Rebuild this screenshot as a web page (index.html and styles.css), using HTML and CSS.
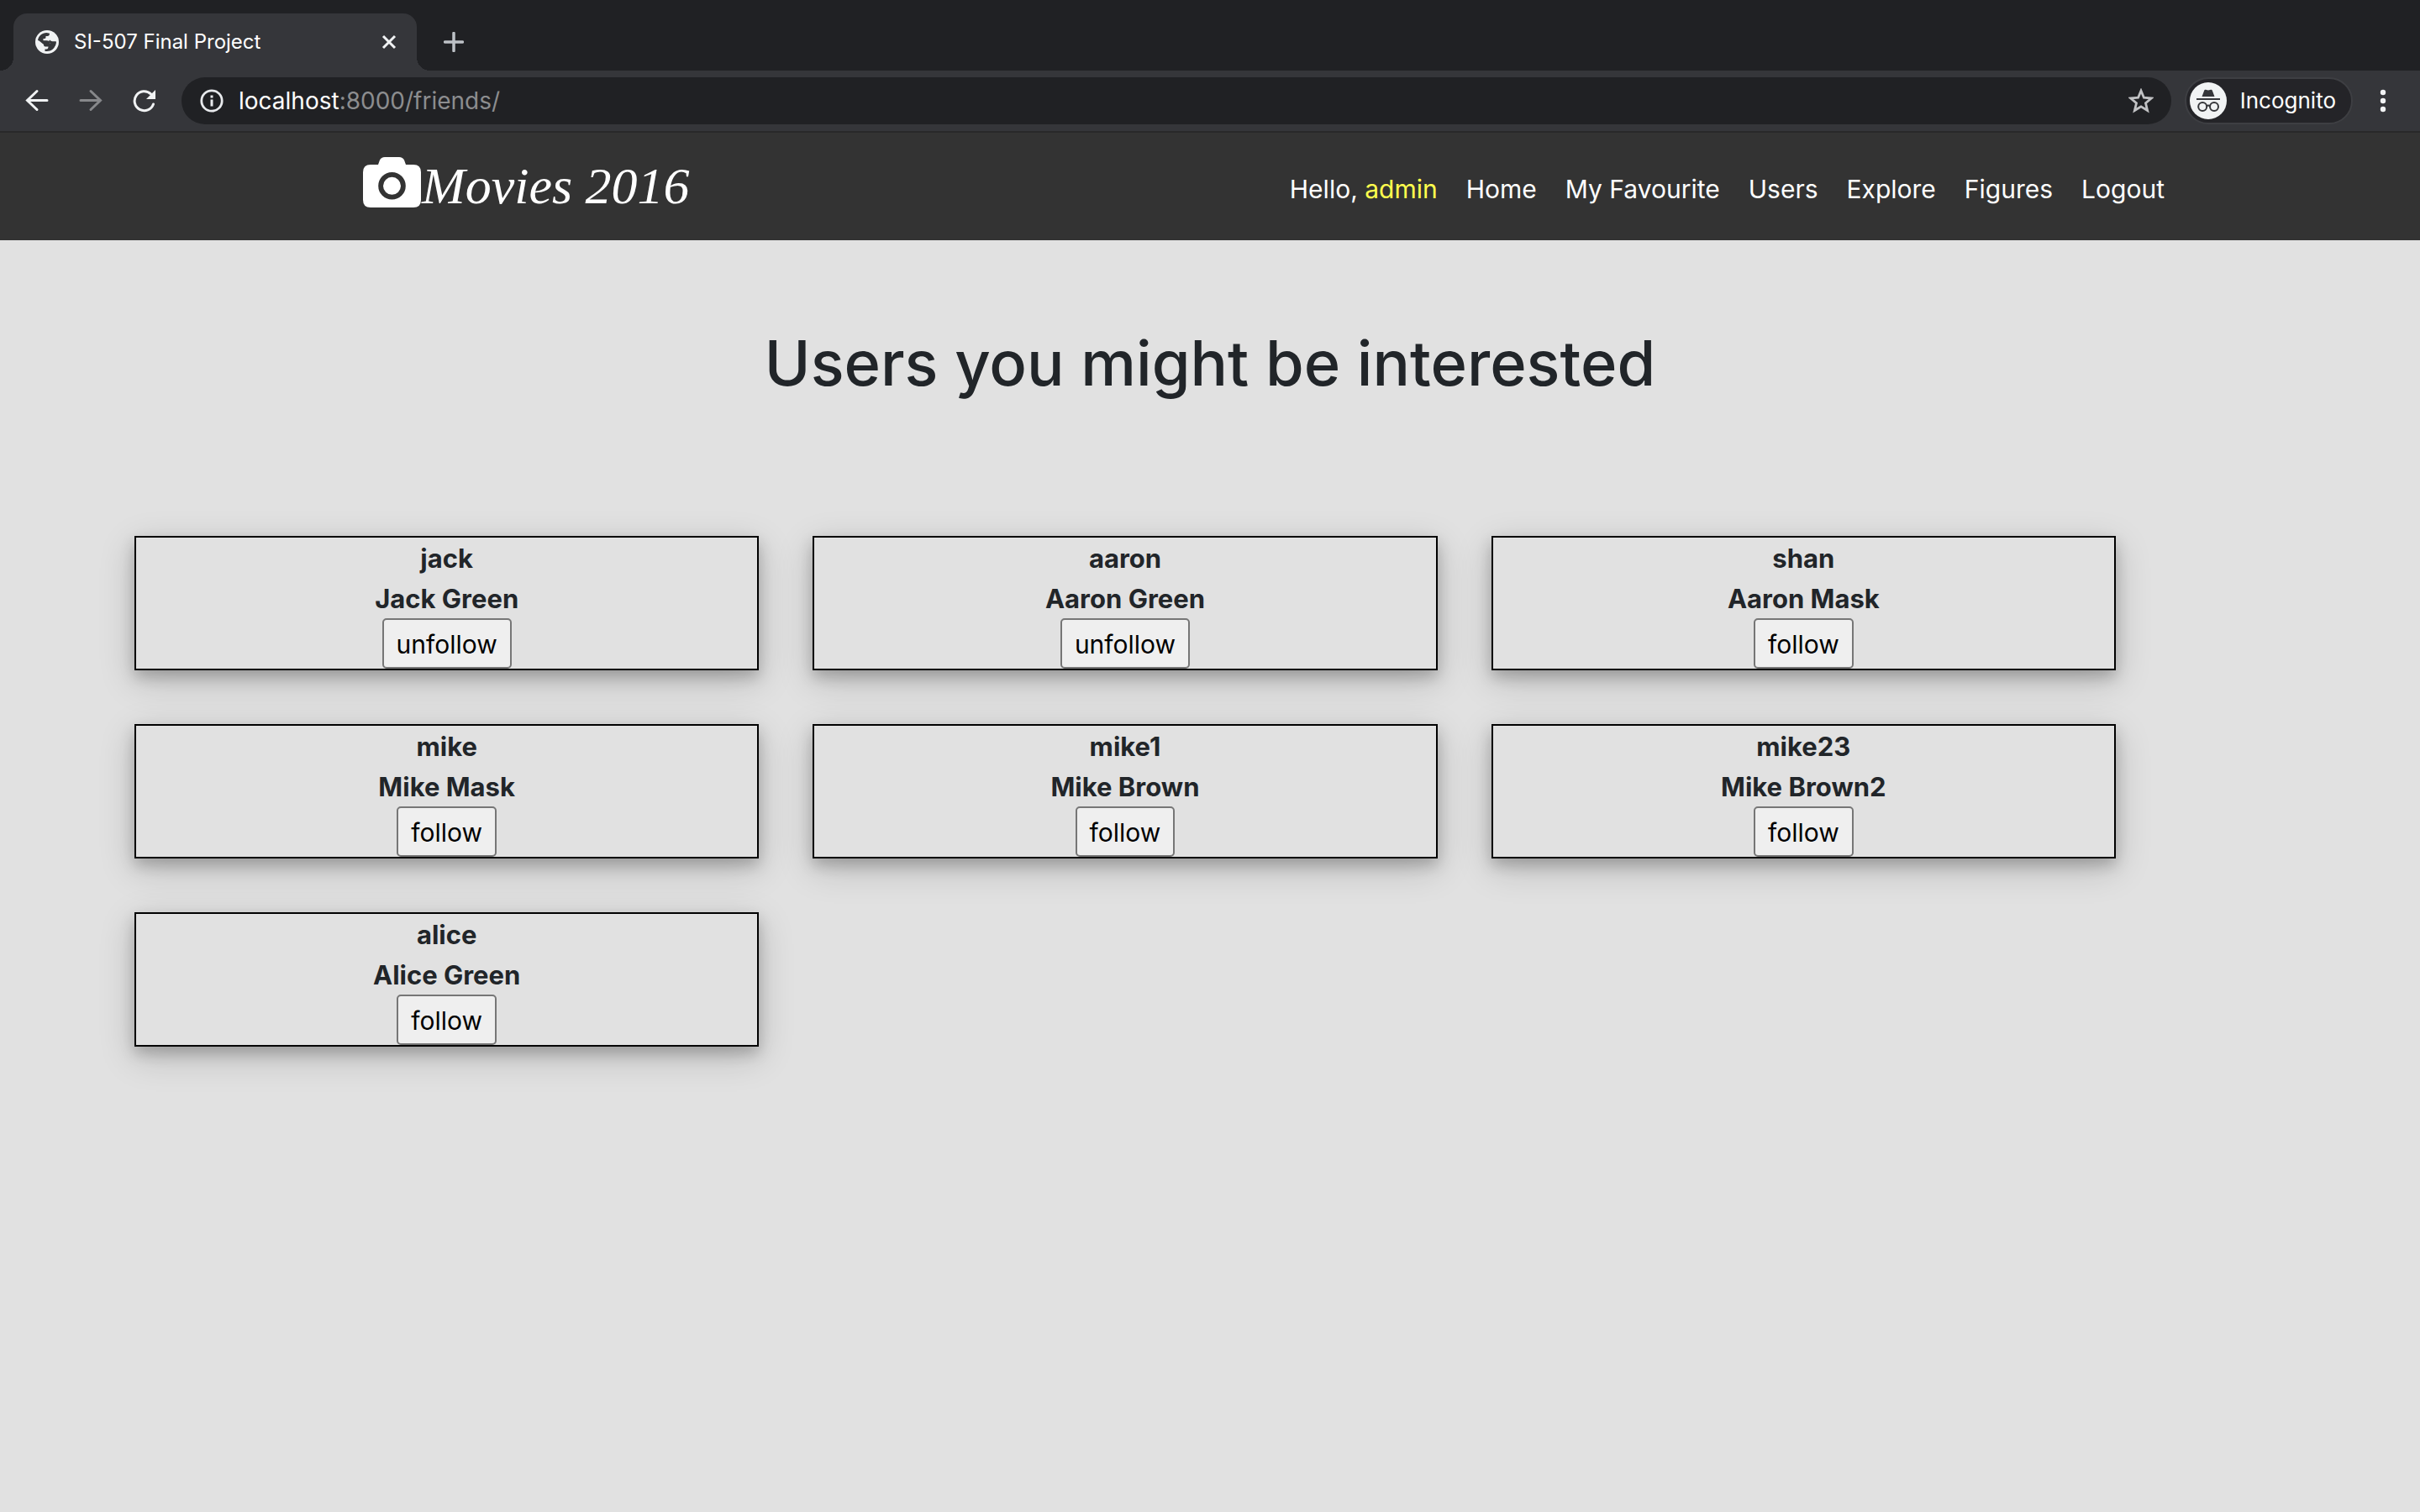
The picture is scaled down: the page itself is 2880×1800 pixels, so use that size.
FILE: index.html
```html
<!DOCTYPE html>
<html lang="en">
<head>
<meta charset="utf-8">
<title>SI-507 Final Project</title>
<link rel="stylesheet" href="styles.css">
</head>
<body>
<header class="browser">
  <div class="tab-strip">
    <div class="tab">
      <svg class="tab-icon" viewBox="0 0 28 28" aria-hidden="true"><circle cx="14" cy="14" r="14" fill="#f1f3f4"/><path fill="#35363a" d="M3 12C4 6.500 8 3 13.500 3L17 3.700C17 6 16 7 14.500 7H12.500V8.500C12.500 9.700 11.600 10 10.500 10H9.500V12.300H13.500C16 12.300 17 13.500 17 15.500H19C20.500 15.500 21 16.500 21.300 17.500L24 16.500C22.800 21.500 19 25 14 25H11.500V22.500H13.500C15 22.500 15.500 21 15.500 19.500H12C10.500 19.500 10 18.500 10 17L4.500 12.500Z"/><path fill="#35363a" d="M17.500 11.500C18.500 13.800 22 13 25 13.500C25 19 20.500 23.500 17 24L17.500 18.500C19.500 18 19.500 16 17.500 15.500C15.500 15 15.800 12.500 17.500 11.500Z"/></svg>
      <span class="tab-title">SI-507 Final Project</span>
      <button class="icon-button tab-close" type="button" aria-label="Close tab"><svg width="18" height="18" viewBox="0 0 18 18"><path d="M2 2L16 16M16 2L2 16" stroke="#f1f3f4" stroke-width="3"/></svg></button>
    </div>
    <button class="icon-button" type="button" aria-label="New tab"><svg width="24" height="24" viewBox="0 0 24 24"><path d="M12 1.500V22.500M1.500 12H22.500" stroke="#bdc1c6" stroke-width="3.500" stroke-linecap="round"/></svg></button>
  </div>
  <div class="toolbar">
    <div class="history">
      <button class="icon-button" type="button" aria-label="Back"><svg width="28" height="28" viewBox="0 0 28 28" fill="none" stroke="#f1f3f4" stroke-width="3" stroke-linecap="round"><path d="M26 13.500H3M14 2.500L2.500 13.500L14 24.500"/></svg></button>
      <button class="icon-button" type="button" aria-label="Forward"><svg width="28" height="28" viewBox="0 0 28 28" fill="none" stroke="#87888b" stroke-width="3" stroke-linecap="round"><path d="M2 13.500H25M14 2.500L25.500 13.500L14 24.500"/></svg></button>
      <button class="icon-button" type="button" aria-label="Reload"><svg width="28" height="28" viewBox="0 0 28 28"><path d="M24.500 18A11.500 11.500 0 1 1 21.500 5.800" fill="none" stroke="#f1f3f4" stroke-width="3" stroke-linecap="round"/><path d="M27 1V12H16Z" fill="#f1f3f4"/></svg></button>
    </div>
    <div class="address">
      <svg width="28" height="28" viewBox="0 0 28 28" aria-hidden="true"><circle cx="14" cy="14" r="12.200" fill="none" stroke="#e8eaed" stroke-width="2.800"/><path d="M12.500 7.500h3v3h-3zM12.500 12.500h3v8h-3z" fill="#e8eaed"/></svg>
      <div class="url" role="textbox" aria-label="Address">localhost<span class="url-rest">:8000/friends/</span></div>
      <button class="icon-button" type="button" aria-label="Bookmark"><svg width="30" height="30" viewBox="0 0 30 30"><path d="M15 3L18.400 11.200L27.300 12L20.500 17.800L22.600 26.500L15 21.800L7.400 26.500L9.500 17.800L2.700 12L11.600 11.200Z" fill="none" stroke="#c1c2c4" stroke-width="2.800"/></svg></button>
    </div>
    <button class="incognito" type="button">
      <svg width="44" height="44" viewBox="0 0 44 44" aria-hidden="true"><circle cx="22" cy="22" r="22" fill="#f1f3f4"/><g fill="#35363a"><path d="M14.500 17L17.300 9.500Q17.800 8.300 19 8.800L22 9.600L25 8.800Q26.200 8.300 26.700 9.500L29.500 17Z"/><path d="M8 19h28v2H8z"/></g><g fill="none" stroke="#35363a" stroke-width="2"><circle cx="15.200" cy="29" r="5"/><circle cx="29" cy="29" r="5"/><path d="M20 28.500Q22 26.500 24 28.500"/></g></svg>
      <span>Incognito</span>
    </button>
    <button class="icon-button" type="button" aria-label="Menu"><svg width="8" height="28" viewBox="0 0 8 28" fill="#f1f3f4"><circle cx="4" cy="4" r="3.200"/><circle cx="4" cy="14" r="3.200"/><circle cx="4" cy="24" r="3.200"/></svg></button>
  </div>
</header>

<nav class="navbar">
  <a class="brand" href="/">
    <svg width="70" height="62" viewBox="0 0 70 62" aria-hidden="true"><path fill="#fff" fill-rule="evenodd" d="M9 10H18L20 4.500Q21.700 1 26 1H43Q47.300 1 49 4.500L51 10H60Q69 10 69 19V52Q69 61 60 61H9Q0 61 0 52V19Q0 10 9 10ZM34.500 19A16.300 16.300 0 1 0 34.500 51.600A16.300 16.300 0 1 0 34.500 19Z"/><circle cx="34.500" cy="35.300" r="10.500" fill="#fff"/></svg>
    <span class="wordmark">Movies 2016</span>
  </a>
  <ul class="menu">
    <li>Hello, <a class="user" href="/user/">admin</a></li>
    <li><a href="/">Home</a></li>
    <li><a href="/favourite/">My Favourite</a></li>
    <li><a href="/friends/">Users</a></li>
    <li><a href="/explore/">Explore</a></li>
    <li><a href="/figures/">Figures</a></li>
    <li><a href="/logout/">Logout</a></li>
  </ul>
</nav>

<main class="page">
  <h1 class="heading">Users you might be interested</h1>
  <div class="cards">
    <article class="card"><p>jack</p><p>Jack Green</p><button class="follow" type="button">unfollow</button></article>
    <article class="card"><p>aaron</p><p>Aaron Green</p><button class="follow" type="button">unfollow</button></article>
    <article class="card"><p>shan</p><p>Aaron Mask</p><button class="follow" type="button">follow</button></article>
    <article class="card"><p>mike</p><p>Mike Mask</p><button class="follow" type="button">follow</button></article>
    <article class="card"><p>mike1</p><p>Mike Brown</p><button class="follow" type="button">follow</button></article>
    <article class="card"><p>mike23</p><p>Mike Brown2</p><button class="follow" type="button">follow</button></article>
    <article class="card"><p>alice</p><p>Alice Green</p><button class="follow" type="button">follow</button></article>
  </div>
</main>
</body>
</html>
```
FILE: styles.css
```css
* {
  box-sizing: border-box;
}

body {
  margin: 0;
  background: #e1e1e1;
  color: #212529;
  font-family: Inter, "Liberation Sans", sans-serif;
  font-size: 30px;
  line-height: 48px;
}

svg {
  display: block;
  flex: none;
}

a {
  color: inherit;
  text-decoration: none;
}

button {
  font: inherit;
}

/* Browser window */
.browser {
  background: #35363a;
  color: #fff;
  border-bottom: 2px solid #29292a;
}

.tab-strip {
  display: flex;
  align-items: center;
  gap: 32px;
  padding: 16px 16px 0;
  background: #202124;
}

.tab {
  position: relative;
  display: flex;
  align-items: center;
  width: 480px;
  height: 68px;
  padding: 0 24px 0 26px;
  border-radius: 16px 16px 0 0;
  background: #35363a;
}

/* Curved feet where the tab meets the toolbar */
.tab::before,
.tab::after {
  content: "";
  position: absolute;
  bottom: 0;
  width: 16px;
  height: 16px;
}

.tab::before {
  right: 100%;
  background: radial-gradient(circle at 0 0, transparent 16px, #35363a 16px);
}

.tab::after {
  left: 100%;
  background: radial-gradient(circle at 100% 0, transparent 16px, #35363a 16px);
}

.tab-icon {
  width: 28px;
  height: 28px;
}

.tab-title {
  flex: 1;
  margin-left: 18px;
  font-size: 24px;
  line-height: 32px;
}

.icon-button {
  flex: none;
  padding: 0;
  border: 0;
  background: none;
}

.toolbar {
  display: flex;
  align-items: center;
  gap: 16px;
  padding: 8px 40px 8px 30px;
}

.history {
  display: flex;
  gap: 36px;
  margin-right: 14px;
}

.address {
  display: flex;
  flex: 1;
  align-items: center;
  height: 56px;
  padding: 0 21px 0 22px;
  border-radius: 28px;
  background: #202124;
}

.url {
  flex: 1;
  margin-left: 18px;
  font-size: 28px;
  line-height: 40px;
}

.url-rest {
  color: #8c8d8f;
}

.incognito {
  display: flex;
  align-items: center;
  gap: 16px;
  height: 56px;
  margin-right: 16px;
  padding: 0 18px 0 4px;
  border: 2px solid #3e3f43;
  border-radius: 28px;
  background: #242428;
  color: #fff;
  font-size: 26px;
  line-height: 40px;
}

/* Site navigation */
.navbar {
  display: flex;
  align-items: center;
  justify-content: space-between;
  height: 128px;
  padding: 0 304px 0 432px;
  background: #333;
  color: #fff;
}

.brand {
  display: flex;
  align-items: center;
  padding-bottom: 10px;
}

.wordmark {
  padding-top: 8px;
  font-family: "Liberation Serif", serif;
  font-size: 62px;
  font-style: italic;
  line-height: 72px;
}

.menu {
  display: flex;
  gap: 34px;
  margin: 0;
  padding: 6px 0 0;
  list-style: none;
}

.user {
  color: #ffff4d;
}

/* Suggested users */
.page {
  padding: 98px 0 64px;
}

.heading {
  margin: 0 0 158px;
  font-size: 74px;
  font-weight: 500;
  line-height: 96px;
  text-align: center;
}

.cards {
  display: grid;
  grid-template-columns: repeat(3, 1fr);
  gap: 64px;
  padding: 0 362px 0 160px;
}

.card {
  display: flex;
  flex-direction: column;
  align-items: center;
  border: 2px solid #000;
  background: #e1e1e1;
  box-shadow: 0 8px 16px rgba(0, 0, 0, 0.2), 0 12px 40px rgba(0, 0, 0, 0.19);
}

.card p {
  margin: 0;
  padding-top: 2px;
  font-size: 31px;
  font-weight: 700;
  line-height: 46px;
}

.follow {
  height: 60px;
  padding: 2px 15px 0;
  border: 2px solid #767676;
  border-radius: 5px;
  background: #efefef;
  color: #000;
}
```
